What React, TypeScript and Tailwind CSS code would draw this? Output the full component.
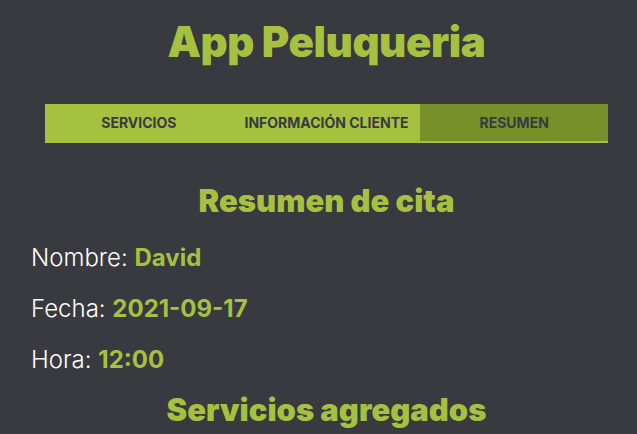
export default function App() {
  const tabs = ['Servicios', 'Información Cliente', 'Resumen'];
  const active = 2;
  return (
    <div className="min-h-screen bg-[#393a40] pl-4 font-['Inter',sans-serif] overflow-hidden">
      <h1 className="pt-[21px] text-center text-[42px] leading-none font-black tracking-[-0.01em] text-[#a5c13f]">
        App Peluqueria
      </h1>
      <nav className="mx-auto mt-[41px] grid h-[39px] w-[563px] grid-cols-3 bg-[#a5c13f] pb-[2px]">
        {tabs.map((t, i) => (
          <button
            key={t}
            className={
              i === active
                ? 'bg-[#77902a] text-[14px] font-bold uppercase text-[#393a40]'
                : 'text-[14px] font-bold uppercase text-[#393a40]'
            }
          >
            {t}
          </button>
        ))}
      </nav>
      <section className="flex flex-col px-[15px]">
        <h2 className="mt-[42px] text-center text-[31px] leading-none font-black text-[#a5c13f]">
          Resumen de cita
        </h2>
        <p className="mt-[30px] text-[24px] leading-none font-light text-white">
          Nombre: <span className="font-bold text-[#a5c13f]">David</span>
        </p>
        <p className="mt-[27px] text-[24px] leading-none font-light text-white">
          Fecha: <span className="font-bold text-[#a5c13f]">2021-09-17</span>
        </p>
        <p className="mt-[27px] text-[24px] leading-none font-light text-white">
          Hora: <span className="font-bold text-[#a5c13f]">12:00</span>
        </p>
        <h2 className="mt-[22px] text-center text-[31px] leading-none font-black text-[#a5c13f]">
          Servicios agregados
        </h2>
      </section>
    </div>
  );
}
